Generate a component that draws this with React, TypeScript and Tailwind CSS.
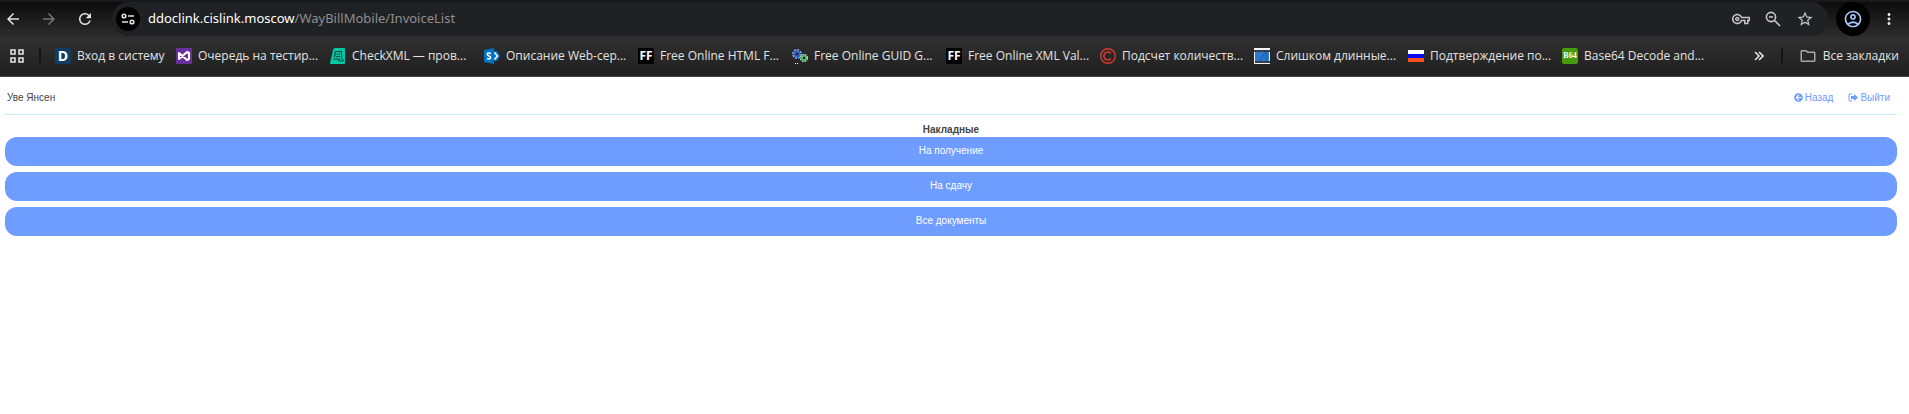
import type { ReactNode } from 'react'
import { FaArrowCircleLeft } from 'react-icons/fa'
import {
  MdArrowBack,
  MdArrowForward,
  MdMoreVert,
  MdOutlineAccountCircle,
  MdOutlineFolder,
  MdOutlineVpnKey,
  MdRefresh,
  MdStarBorder
} from 'react-icons/md'

interface Bookmark {
  title: string
  icon: ReactNode
}

const ffIcon = (
  <span className="flex w-4 h-4 items-center justify-center bg-black text-[12px] leading-4 font-bold text-white">FF</span>
)

const bookmarks: Bookmark[] = [
  {
    title: 'Очередь на тестир...',
    icon: (
      <svg viewBox="0 0 16 16" className="w-4 h-4">
        <rect width="16" height="16" fill="#68309c" />
        <path d="M3 5v6l8-7 2 1v6l-2 1-8-7z" fill="none" stroke="#fff" strokeWidth="2" strokeLinejoin="round" />
      </svg>
    )
  },
  {
    title: 'CheckXML — пров...',
    icon: (
      <svg viewBox="0 0 16 16" className="w-4 h-4">
        <path d="M5 0h9a1 1 0 0 1 1 1v14a1 1 0 0 1-1 1H1q-1.200 0-1-1L3.200 1.500Q3.700 0 5 0z" fill="#00c9a7" />
        <path d="M5 3.500h6.500V11M5.500 3.500L4.500 9M6.500 6h3.500M6 8.500h4M3 11h6v2h4v-2" fill="none" stroke="#17443d" strokeWidth="1.200" />
      </svg>
    )
  },
  {
    title: 'Описание Web-сер...',
    icon: (
      <svg viewBox="0 0 16 16" className="w-4 h-4">
        <path d="M0 2l10-2v16L0 14z" fill="#0072c6" />
        <path d="M10 3l3 0 3 5-3 5h-3z" fill="#0072c6" />
        <path d="M10.500 4.500l3 3.500-3 3.500" fill="none" stroke="#fff" strokeWidth="1.600" />
        <path d="M7 5.500Q3 4 3.200 6.300 3.500 7.500 5 8q2 .7 1.500 2Q5.500 11.500 3 10.500" fill="none" stroke="#fff" strokeWidth="1.500" />
      </svg>
    )
  },
  { title: 'Free Online HTML F...', icon: ffIcon },
  {
    title: 'Free Online GUID G...',
    icon: (
      <svg viewBox="0 0 16 16" className="w-4 h-4">
        <circle cx="5" cy="6" r="3.500" fill="none" stroke="#7ba0f5" strokeWidth="3" strokeDasharray="1.800 .9" />
        <circle cx="5" cy="6" r="2.500" fill="none" stroke="#3b62c9" strokeWidth="2" />
        <circle cx="12" cy="10" r="3" fill="none" stroke="#8fdc9b" strokeWidth="2.500" strokeDasharray="1.600 .8" />
        <circle cx="12" cy="10" r="2" fill="none" stroke="#5bb56d" strokeWidth="1.500" />
        <path d="M3 15.500h1M5 15.500h1" stroke="#fff" />
      </svg>
    )
  },
  { title: 'Free Online XML Val...', icon: ffIcon },
  {
    title: 'Подсчет количеств...',
    icon: (
      <svg viewBox="0 0 16 16" className="w-4 h-4" fill="none" stroke="#d83a32">
        <circle cx="8" cy="8" r="7.300" strokeWidth="1.400" />
        <path d="M11 5.500a4 4 0 1 0 0 5" strokeWidth="1.600" />
      </svg>
    )
  },
  {
    title: 'Слишком длинные...',
    icon: (
      <svg viewBox="0 0 16 16" className="w-4 h-4">
        <rect width="16" height="16" fill="#f4f4f4" />
        <path d="M0 2h16v2H0zM1 13h15v2H1z" fill="#33424f" />
        <path d="M1 4h14v9H1z" fill="#2b78cf" />
        <path d="M6 13l5-9M12 13V4" stroke="#195aa6" />
      </svg>
    )
  },
  {
    title: 'Подтверждение по...',
    icon: (
      <svg viewBox="0 0 16 16" className="w-4 h-4">
        <path d="M0 2h16v4H0z" fill="#fff" />
        <path d="M0 6h16v4H0z" fill="#0a0af0" />
        <path d="M0 10h16v4H0z" fill="#f4511e" />
      </svg>
    )
  },
  {
    title: 'Base64 Decode and...',
    icon: (
      <span className="flex w-4 h-4 items-center justify-center rounded-xs bg-[#459b0b] font-['Liberation_Serif',serif] text-[8px] leading-4 font-bold text-white">
        B64
      </span>
    )
  }
]

const sections = ['На получение', 'На сдачу', 'Все документы']

function Toolbar() {
  return (
    <div className="flex h-[34px] items-center text-[#c7c7c7]">
      <button aria-label="Назад" className="ml-0.5 p-0.5 text-[#e3e3e3]">
        <MdArrowBack className="w-[18px] h-[18px]" />
      </button>
      <button aria-label="Вперёд" className="ml-3.5 p-0.5 text-[#757575]">
        <MdArrowForward className="w-[18px] h-[18px]" />
      </button>
      <button aria-label="Обновить" className="ml-3.5 p-0.5 text-[#e3e3e3]">
        <MdRefresh className="w-[18px] h-[18px]" />
      </button>
      <div className="ml-4 flex h-[34px] grow items-center rounded-full bg-[#202124] pl-1 pr-3.5">
        <button aria-label="Сведения о сайте" className="flex w-6 h-6 items-center justify-center rounded-full bg-black text-[#e3e3e3]">
          <svg viewBox="0 0 14 14" className="w-3.5 h-3.5" fill="none" stroke="currentColor" strokeWidth="1.600">
            <circle cx="3" cy="4" r="1.800" />
            <path d="M7 4h6M1 10h6" />
            <circle cx="11" cy="10" r="1.800" />
          </svg>
        </button>
        <div className="ml-2 grow font-['Noto_Sans',sans-serif] text-[13px] text-[#8f8f8f]">
          <span className="text-white">ddoclink.cislink.moscow</span>/WayBillMobile/InvoiceList
        </div>
        <div className="flex items-center gap-3.5">
          <button aria-label="Пароли">
            <MdOutlineVpnKey className="w-[18px] h-[18px]" />
          </button>
          <button aria-label="Масштаб">
            <svg viewBox="0 0 18 18" className="w-[18px] h-[18px]" fill="none" stroke="currentColor" strokeWidth="1.600">
              <circle cx="7" cy="7" r="4.600" />
              <path d="M10.500 10.500L16 16M5 7h4" />
            </svg>
          </button>
          <button aria-label="Добавить в закладки">
            <MdStarBorder className="w-[18px] h-[18px]" />
          </button>
        </div>
      </div>
      <button aria-label="Профиль" className="ml-2 flex w-[34px] h-[34px] items-center justify-center rounded-full bg-black text-[#a8c7fa]">
        <MdOutlineAccountCircle className="w-5 h-5" />
      </button>
      <button aria-label="Меню" className="ml-2.5 mr-[11px] text-[#e3e3e3]">
        <MdMoreVert className="w-[18px] h-[18px]" />
      </button>
    </div>
  )
}

function BookmarksBar() {
  return (
    <div className="flex h-10 items-center pl-2.5 pr-2.5 text-xs text-[#e3e3e3]">
      <button aria-label="Приложения">
        <svg viewBox="0 0 14 14" className="w-3.5 h-3.5" fill="none" stroke="currentColor" strokeWidth="1.600">
          <path d="M1 1h4v4H1zM9 1h4v4H9zM1 9h4v4H1zM9 9h4v4H9z" />
        </svg>
      </button>
      <span className="ml-[15px] w-0.5 h-4 bg-[#141414]" />
      <nav className="ml-3.5 flex grow items-center gap-4 whitespace-nowrap">
        <a href="#" className="flex w-[105px] items-center gap-1.5">
          <span className="flex w-4 h-4 shrink-0 items-center justify-center rounded-xs bg-[#143d66] text-[14px] leading-4 font-bold text-white">D</span>
          Вход в систему
        </a>
        {bookmarks.map((bookmark, index) => (
          <a key={index} href="#" className="flex w-[138px] items-center gap-1.5">
            <span className="shrink-0">{bookmark.icon}</span>
            {bookmark.title}
          </a>
        ))}
      </nav>
      <button aria-label="Другие закладки">
        <svg viewBox="0 0 10 10" className="w-2.5 h-2.5" fill="none" stroke="currentColor" strokeWidth="1.600">
          <path d="M1 1l4 4-4 4M5 1l4 4-4 4" />
        </svg>
      </button>
      <span className="ml-[17px] w-0.5 h-4 bg-[#141414]" />
      <button className="ml-4 flex items-center gap-1.5 whitespace-nowrap">
        <MdOutlineFolder className="w-[18px] h-[18px] text-[#a8a8a8]" />
        Все закладки
      </button>
    </div>
  )
}

export default function App() {
  return (
    <div className="min-h-screen bg-white">
      <header className="border-b border-[#404040] border-t-2 border-t-[#171a1a] bg-linear-to-b from-[#0c0c0c] via-[#2f2f2f] to-[#202020] font-['Open_Sans','Noto_Sans',sans-serif]">
        <Toolbar />
        <BookmarksBar />
      </header>

      <main className="pl-[5px] pr-3 font-['Liberation_Sans',sans-serif] text-[10px] leading-3 text-[#444444]">
        <div className="flex h-[38px] items-center justify-between border-b border-[#c8e8ff] pt-1 pl-0.5 pr-[7px]">
          <span>Уве Янсен</span>
          <nav className="flex gap-[15px] text-[#6f9cff]">
            <a href="#" className="flex items-center gap-0.5">
              <FaArrowCircleLeft className="w-[9px] h-[9px]" />
              Назад
            </a>
            <a href="#" className="flex items-center gap-0.5">
              <svg viewBox="0 0 10 9" className="w-2.5 h-[9px]">
                <path d="M4 1H2Q1 1 1 2v5q0 1 1 1h2" fill="none" stroke="currentColor" />
                <path d="M3 3h3V1l4 3.500L6 8V6H3z" fill="currentColor" />
              </svg>
              Выйти
            </a>
          </nav>
        </div>

        <h1 className="pt-[9px] pb-px text-center font-bold">Накладные</h1>
        <div className="flex flex-col gap-1.5">
          {sections.map(section => (
            <button key={section} className="h-[29px] rounded-xl bg-[#6f9cff] pb-0.5 text-white">
              {section}
            </button>
          ))}
        </div>
      </main>
    </div>
  )
}
